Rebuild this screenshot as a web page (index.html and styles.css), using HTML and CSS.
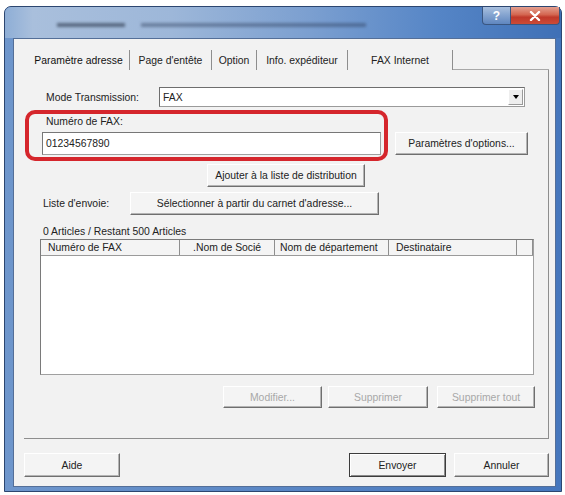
FILE: index.html
```html
<!DOCTYPE html>
<html lang="fr">
<head>
  <meta charset="UTF-8">
  <title>Paramètre adresse</title>
  <link rel="stylesheet" href="styles.css">
</head>
<body>

  <div class="dlg">
    <div class="dlg-caption">
      <div class="caption-text">
        <span class="smudge smudge-a"></span>
        <span class="smudge smudge-b"></span>
      </div>
      <div class="caption-buttons">
        <span class="cap-btn help">?</span>
        <span class="cap-btn close">
          <svg width="12" height="10" viewBox="0 0 12 10"><path d="M2 1 L10 9 M10 1 L2 9" stroke="#fff" stroke-width="2.4" stroke-linecap="round"/></svg>
        </span>
      </div>
    </div>

    <div class="client">
      <div class="tabs">
        <div class="tab t1 active">Paramètre adresse</div>
        <div class="tab t2">Page d'entête</div>
        <div class="tab t3">Option</div>
        <div class="tab t4">Info. expéditeur</div>
        <div class="tab t5">FAX Internet</div>
        <div class="tab-fill"></div>
      </div>

      <div class="panel">
        <div class="row mode-row">
          <span class="lbl mode-lbl">Mode Transmission:</span>
          <div class="combo">
            <span class="combo-text">FAX</span>
            <span class="combo-arrow"><i></i></span>
          </div>
        </div>

        <div class="fax-group">
          <div class="lbl fax-lbl">Numéro de FAX:</div>
          <div class="row fax-row">
            <div class="edit">01234567890</div>
            <button class="btn opt-btn">Paramètres d'options...</button>
          </div>
          <!-- highlight frame drawn over the fax number block -->
          <div class="highlight"></div>
        </div>

        <div class="row add-row">
          <button class="btn add-btn">Ajouter à la liste de distribution</button>
        </div>

        <div class="row list-row">
          <span class="lbl list-lbl">Liste d'envoie:</span>
          <button class="btn pick-btn">Sélectionner à partir du carnet d'adresse...</button>
        </div>

        <div class="count">0 Articles / Restant 500 Articles</div>

        <div class="listview">
          <div class="lv-head">
            <span class="col c1">Numéro de FAX</span>
            <span class="col c2">.Nom de Socié</span>
            <span class="col c3">Nom de département</span>
            <span class="col c4">Destinataire</span>
            <span class="col c5"></span>
          </div>
        </div>

        <div class="row edit-row">
          <button class="btn off mod-btn" disabled>Modifier...</button>
          <button class="btn off del-btn" disabled>Supprimer</button>
          <button class="btn off all-btn" disabled>Supprimer tout</button>
        </div>
      </div>

      <div class="footer">
        <button class="btn foot help-btn">Aide</button>
        <button class="btn foot default send-btn">Envoyer</button>
        <button class="btn foot cancel-btn">Annuler</button>
      </div>
    </div>
  </div>

</body>
</html>
```

FILE: styles.css
```css
* {
  box-sizing: border-box;
}

body {
  margin: 0;
  background: #fff;
  font-family: "Liberation Sans", Arial, sans-serif;
  font-size: 10.4px;
  color: #222;
}

/* dialog frame: aero blue */
.dlg {
  margin: 6px 0 0 4px;
  width: 558px;
  height: 486px;
  border: 1px solid #2c4670;
  border-radius: 7px 7px 0 0;
  padding: 0 5px 4px 8px;
  display: flex;
  flex-direction: column;
  background-color: #4f80c2;
  background-image: linear-gradient(90deg, #6e96cc 0%, #5d89c6 40%, #4677bd 100%);
}

.dlg-caption {
  height: 31px;
  margin: 0 -5px 0 -8px;
  display: flex;
  border-radius: 6px 6px 0 0;
  background-color: #7b9fd0;
  background-image: linear-gradient(90deg, #8eaed6 0%, #a9bfdc 5%, #9db7d9 30%, #7b9fd0 55%, #5585c6 78%, #3f70b6 100%);
}

.caption-text {
  flex: 1;
  display: flex;
  align-items: center;
  padding-left: 52px;
  gap: 16px;
}

.smudge {
  height: 4px;
  background: rgba(40, 52, 72, 0.6);
  filter: blur(1.6px);
  margin-top: 4px;
}

.smudge-a {
  width: 68px;
}

.smudge-b {
  width: 225px;
  background: rgba(45, 60, 88, 0.45);
}

.caption-buttons {
  display: flex;
  align-items: flex-start;
  margin-right: 1px;
}

.cap-btn {
  height: 18px;
  display: flex;
  align-items: center;
  justify-content: center;
  border: 1px solid #3a5680;
  border-top: 0;
  color: #fff;
  font-weight: bold;
  font-size: 12px;
}

.cap-btn.help {
  width: 29px;
  border-radius: 0 0 0 4px;
  background: linear-gradient(180deg, #a9c0de 0%, #86a5d0 45%, #5f86bf 100%);
}

.cap-btn.close {
  width: 49px;
  border-left: 0;
  border-radius: 0 0 4px 0;
  background: linear-gradient(180deg, #e3a090 0%, #d46650 45%, #c0392a 60%, #cc4b36 100%);
}

/* client area */
.client {
  flex: 1;
  background: #f2f2f2;
  border: 1px solid #546f98;
  padding: 11px 0 0 10px;
  display: flex;
  flex-direction: column;
}

.tabs {
  display: flex;
  height: 20px;
  width: 525px;
}

.tab {
  display: flex;
  align-items: center;
  justify-content: center;
  border-right: 1px solid #8e8e8e;
  height: 20px;
  padding-top: 1px;
}

.tab.active {
  color: #111;
}

.t1 { width: 106px; padding-left: 4px; }
.t2 { width: 82px; }
.t3 { width: 45px; }
.t4 { width: 91px; }
.t5 { width: 105px; }

.tab-fill {
  flex: 1;
  border-bottom: 1px solid #a8a8a8;
}

.panel {
  width: 525px;
  height: 369px;
  border-right: 1px solid #8e8e8e;
  border-bottom: 1px solid #8e8e8e;
  padding-top: 17px;
}

.row {
  display: flex;
  align-items: center;
}

.lbl {
  white-space: nowrap;
}

/* transmission mode */
.mode-row {
  height: 20px;
  padding-left: 22px;
}

.mode-lbl {
  width: 113px;
}

.combo {
  width: 366px;
  height: 20px;
  background: #fff;
  border: 1px solid #9a9a9a;
  border-top-color: #6e6e6e;
  border-left-color: #6e6e6e;
  display: flex;
  align-items: center;
}

.combo-text {
  flex: 1;
  padding-left: 3px;
}

.combo-arrow {
  width: 15px;
  height: 16px;
  margin-right: 1px;
  border: 1px solid #9a9a9a;
  border-top-color: #fff;
  border-left-color: #fff;
  background: #eeeeee;
  display: flex;
  align-items: center;
  justify-content: center;
}

.combo-arrow i {
  border-left: 3px solid transparent;
  border-right: 3px solid transparent;
  border-top: 4px solid #000;
}

/* fax number */
.fax-group {
  position: relative;
}

.fax-lbl {
  margin: 8px 0 0 22px;
  line-height: 14px;
}

.fax-row {
  margin-top: 3px;
  height: 23px;
  padding-left: 18px;
}

.edit {
  width: 339px;
  height: 23px;
  background: #fff;
  border: 1px solid #a0a0a0;
  border-top-color: #777;
  border-left-color: #777;
  padding: 0 3px;
  display: flex;
  align-items: center;
}

.highlight {
  position: absolute;
  left: 1px;
  top: -5px;
  width: 363px;
  height: 51px;
  border: 4px solid #d5262c;
  border-radius: 10px;
  pointer-events: none;
}

/* buttons */
.btn {
  font: inherit;
  color: #222;
  background: #f4f4f4;
  border: 1px solid;
  border-color: #ffffff #6f6f6f #6f6f6f #ffffff;
  box-shadow: inset -1px -1px 0 #b4b4b4;
  padding: 0;
  height: 23px;
}

.btn.off {
  color: #a8a8a8;
}

.opt-btn {
  margin-left: 14px;
  width: 133px;
}

.add-row {
  margin-top: 9px;
  padding-left: 183px;
}

.add-btn {
  width: 158px;
}

.list-row {
  margin-top: 5px;
  padding-left: 19px;
}

.list-lbl {
  width: 87px;
}

.pick-btn {
  width: 249px;
}

.count {
  margin: 10px 0 0 19px;
  line-height: 14px;
}

/* list view */
.listview {
  margin-left: 16px;
  width: 494px;
  height: 136px;
  background: #fff;
  border: 1px solid #a0a0a0;
  border-top-color: #7a7a7a;
  border-left-color: #7a7a7a;
}

.lv-head {
  display: flex;
  height: 16px;
  background: #f4f4f4;
  border-bottom: 1px solid #9a9a9a;
}

.col {
  border-right: 1px solid #8e8e8e;
  padding-left: 7px;
  line-height: 15px;
  white-space: nowrap;
  overflow: hidden;
}

.c1 { width: 139px; }
.c2 { width: 95px; padding-left: 13px; }
.c3 { width: 114px; padding-left: 5px; }
.c4 { width: 128px; }
.c5 { width: 16px; }

.edit-row {
  margin-top: 11px;
  padding-left: 199px;
}

.edit-row .btn {
  height: 22px;
}

.mod-btn { width: 99px; }
.del-btn { width: 100px; margin-left: 6px; }
.all-btn { width: 98px; margin-left: 9px; }

/* dialog buttons */
.footer {
  display: flex;
  margin-top: 14px;
  width: 525px;
}

.btn.foot {
  height: 24px;
}

.help-btn { width: 96px; }
.send-btn { width: 97px; margin-left: auto; }
.cancel-btn { width: 95px; margin-left: 8px; }

.btn.default {
  border-color: #3c3c3c;
  box-shadow: inset 1px 1px 0 #fff, inset -1px -1px 0 #8a8a8a;
}
```
